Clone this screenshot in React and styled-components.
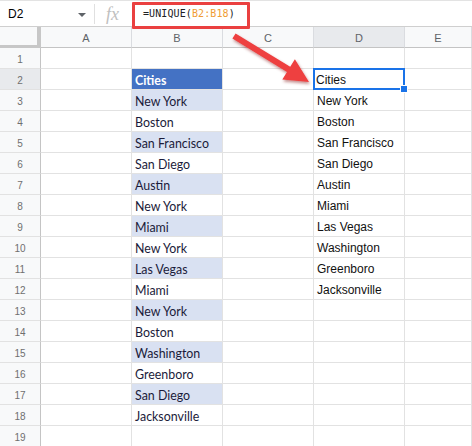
import React from "react";
import styled, { createGlobalStyle, css } from "styled-components";

const GlobalStyle = createGlobalStyle`
  html, body { margin: 0; padding: 0; background: #fff; }
  * { box-sizing: border-box; }
`;

const Page = styled.div`
  position: relative;
  width: 472px;
  height: 446px;
  overflow: hidden;
  background: #fff;
  font-family: "Liberation Sans", Arial, sans-serif;
`;

const FormulaBar = styled.div`
  display: flex;
  align-items: center;
  height: 27px;
  border-top: 1px solid #e3e3e3;
  border-bottom: 1px solid #cfcfcf;
`;

const NameBox = styled.div`
  width: 95px;
  height: 20px;
  display: flex;
  align-items: center;
  justify-content: space-between;
  padding: 0 8px 0 8px;
  border-right: 1px solid #e0e0e0;
  font-size: 12px;
  color: #000;
`;

const Caret = styled.span`
  width: 0;
  height: 0;
  border-left: 4px solid transparent;
  border-right: 4px solid transparent;
  border-top: 4px solid #5f6368;
  margin-top: 2px;
`;

const Fx = styled.div`
  width: 48px;
  padding-left: 11px;
  font-family: "Liberation Serif", "DejaVu Serif", serif;
  font-style: italic;
  font-size: 18px;
  color: #c0c0c0;
  line-height: 1;
`;

const Formula = styled.div`
  font-family: "DejaVu Sans Mono", "Liberation Mono", monospace;
  font-size: 10px;
  color: #202124;
  letter-spacing: 0.1px;
`;

const Ref = styled.span`
  color: #f09c35;
`;

const Callout = styled.div`
  position: absolute;
  left: 132px;
  top: 2px;
  width: 118px;
  height: 27px;
  border: 3px solid #ea4040;
  border-radius: 1px;
`;

const Sheet = styled.div`
  display: grid;
  grid-template-columns: 41px 91px 91px 91px 91px 1fr;
  grid-auto-rows: 21px;
`;

const headerBase = css`
  background: #f8f9fa;
  color: #5f6368;
  display: flex;
  align-items: center;
  justify-content: center;
  border-right: 1px solid #dadce0;
  border-bottom: 1px solid #dadce0;
`;

const Corner = styled.div`
  ${headerBase};
  border-right: 4px solid #c7c7c7;
  border-bottom: 3px solid #c7c7c7;
`;

const ColHeader = styled.div`
  ${headerBase};
  font-size: 11px;
  border-bottom: 1px solid #c4c4c4;
  background: ${(p) => (p.$active ? "#e8eaed" : "#f8f9fa")};
  padding-top: 1px;
`;

const RowHeader = styled.div`
  ${headerBase};
  font-size: 10px;
  color: #6f6f6f;
  border-right: 1px solid #c4c4c4;
  border-bottom: 1px solid #e2e2e2;
  background: ${(p) => (p.$active ? "#e8eaed" : "#f8f9fa")};
  padding-top: 2px;
`;

const fills = {
  head: "#4472c4",
  band: "#d9e1f2",
  none: "#ffffff",
};

const Cell = styled.div`
  position: relative;
  display: flex;
  align-items: center;
  padding: 2px 3px 0 3px;
  border-right: 1px solid #e2e2e2;
  border-bottom: 1px solid #e2e2e2;
  background: ${(p) => fills[p.$fill || "none"]};
  white-space: nowrap;
  overflow: visible;
  ${(p) =>
    p.$selected &&
    css`
      box-shadow: inset 0 0 0 2px #1a73e8;
      margin: -1px 0 0 -1px;
      border: none;
      &::after {
        content: "";
        position: absolute;
        right: -3px;
        bottom: -3px;
        width: 6px;
        height: 6px;
        background: #1a73e8;
        border: 1px solid #fff;
        z-index: 2;
      }
    `}
`;

const CalibriText = styled.span`
  font-family: "Lato", "Open Sans", sans-serif;
  font-size: 12.4px;
  color: ${(p) => (p.$head ? "#ffffff" : "#1b1b3a")};
  font-weight: ${(p) => (p.$head ? 700 : 400)};
`;

const ArialText = styled.span`
  font-family: "Liberation Sans", Arial, sans-serif;
  font-size: 12px;
  color: #111;
`;

const ArrowSvg = styled.svg`
  position: absolute;
  left: 0;
  top: 0;
  pointer-events: none;
`;

const bData = [
  null,
  "Cities",
  "New York",
  "Boston",
  "San Francisco",
  "San Diego",
  "Austin",
  "New York",
  "Miami",
  "New York",
  "Las Vegas",
  "Miami",
  "New York",
  "Boston",
  "Washington",
  "Greenboro",
  "San Diego",
  "Jacksonville",
  null,
];

const dData = [
  null,
  "Cities",
  "New York",
  "Boston",
  "San Francisco",
  "San Diego",
  "Austin",
  "Miami",
  "Las Vegas",
  "Washington",
  "Greenboro",
  "Jacksonville",
];

const cols = ["A", "B", "C", "D", "E"];

export default function App() {
  const rows = Array.from({ length: 19 }, (_, i) => i + 1);
  return (
    <>
      <GlobalStyle />
      <Page>
        <FormulaBar>
          <NameBox>
            D2
            <Caret />
          </NameBox>
          <Fx>fx</Fx>
          <Formula>
            =UNIQUE(<Ref>B2:B18</Ref>)
          </Formula>
        </FormulaBar>
        <Sheet>
          <Corner />
          {cols.map((c) => (
            <ColHeader key={c} $active={c === "D"}>
              {c}
            </ColHeader>
          ))}
          {rows.map((r) => {
            const b = bData[r - 1];
            const d = dData[r - 1];
            const bFill =
              r === 2 ? "head" : r >= 3 && r <= 17 && r % 2 === 1 ? "band" : "none";
            return (
              <React.Fragment key={r}>
                <RowHeader $active={r === 2}>{r}</RowHeader>
                <Cell />
                <Cell $fill={bFill}>
                  {b && <CalibriText $head={r === 2}>{b}</CalibriText>}
                </Cell>
                <Cell />
                <Cell $selected={r === 2}>{d && <ArialText>{d}</ArialText>}</Cell>
                <Cell />
              </React.Fragment>
            );
          })}
        </Sheet>
        <Callout />
        <ArrowSvg width="472" height="446" viewBox="0 0 472 446">
          <defs>
            <filter id="sh" x="-20%" y="-20%" width="140%" height="140%">
              <feDropShadow dx="1" dy="2" stdDeviation="1.5" floodColor="#7a1010" floodOpacity="0.45" />
            </filter>
          </defs>
          <g filter="url(#sh)" fill="#ee3f3f">
            <path d="M232.4 38.6 L235.6 33.4 L290.2 66.8 L294.9 59.2 L309 82 L282.3 79.6 L287.0 72.0 Z" />
          </g>
        </ArrowSvg>
      </Page>
    </>
  );
}
